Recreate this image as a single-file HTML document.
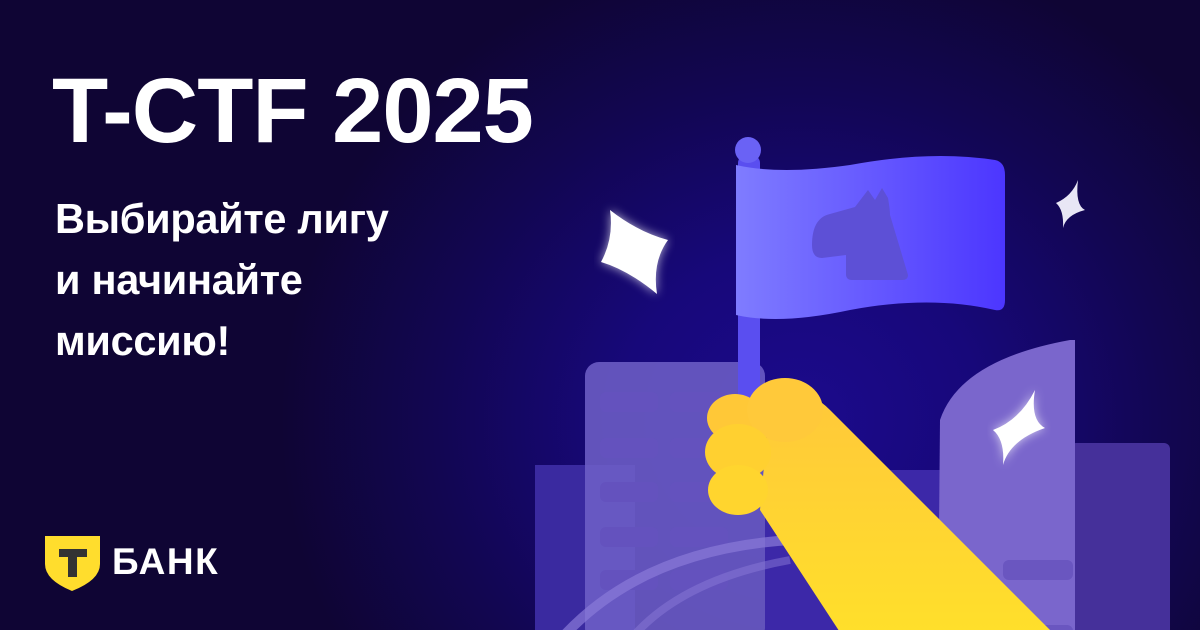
<!DOCTYPE html>
<html><head><meta charset="utf-8"><style>
html,body{margin:0;padding:0}
body{width:1200px;height:630px;overflow:hidden;position:relative;font-family:"Liberation Sans",sans-serif;
background:radial-gradient(ellipse 520px 480px at 800px 420px,#1c0a8c 0%,#17087a 35%,#120652 70%,#0f0534 100%);}
.t{position:absolute;color:#fff;font-weight:bold}
</style></head><body>
<div class="t" style="left:52px;top:60px;font-size:92px;letter-spacing:-1px;line-height:102px">T-CTF 2025</div>
<div class="t" style="left:55px;top:188px;font-size:41.5px;line-height:61px;letter-spacing:-0.3px">Выбирайте лигу<br>и начинайте<br>миссию!</div>
<svg style="position:absolute;left:0;top:0" width="1200" height="630" viewBox="0 0 1200 630">
<defs>
<linearGradient id="fl" x1="0" x2="1"><stop offset="0" stop-color="#7f7cff"/><stop offset="1" stop-color="#4c36ff"/></linearGradient>
<linearGradient id="arm" x1="0" y1="0" x2="0" y2="1"><stop offset="0" stop-color="#ffc83a"/><stop offset="1" stop-color="#ffe02a"/></linearGradient>
<filter id="gl"><feGaussianBlur stdDeviation="5"/></filter>
</defs>
<rect x="535" y="465" width="100" height="170" fill="#3a2aa0"/>
<rect x="585" y="362" width="180" height="280" rx="14" fill="#7060c8" opacity="0.85"/>
<g fill="#6452be">
<rect x="600" y="392" width="58" height="20" rx="6"/><rect x="670" y="392" width="58" height="20" rx="6"/>
<rect x="600" y="438" width="58" height="20" rx="6"/><rect x="670" y="438" width="58" height="20" rx="6"/>
<rect x="600" y="482" width="58" height="20" rx="6"/><rect x="670" y="482" width="58" height="20" rx="6"/>
<rect x="600" y="527" width="58" height="20" rx="6"/><rect x="670" y="527" width="58" height="20" rx="6"/>
<rect x="600" y="570" width="58" height="20" rx="6"/><rect x="670" y="570" width="58" height="20" rx="6"/>
</g>
<rect x="765" y="470" width="200" height="170" fill="#3c28a8"/>
<rect x="1070" y="443" width="100" height="200" rx="6" fill="#45309a"/>
<path d="M940 420 Q960 360 1070 340 L1075 340 L1075 640 L938 640 Z" fill="#7a66cc"/>
<g fill="#6a56c0"><rect x="1003" y="560" width="70" height="20" rx="6"/><rect x="1003" y="625" width="70" height="20" rx="6"/></g>
<path d="M560 640 Q640 550 790 540" stroke="#8a7ad8" stroke-width="10" fill="none" opacity="0.7"/>
<path d="M630 640 Q680 580 790 560" stroke="#8a7ad8" stroke-width="8" fill="none" opacity="0.5"/>
<rect x="738" y="155" width="22" height="250" rx="8" fill="#5a4ef0"/>
<circle cx="748" cy="150" r="13" fill="#6a62f5"/>
<path d="M736 165 Q780 175 850 165 Q930 150 995 160 Q1005 162 1005 175 L1005 300 Q1005 312 995 310 Q930 295 850 310 Q780 325 736 315 Z" fill="url(#fl)"/>
<path d="M812 245 Q812 218 830 214 L855 207 L868 190 L875 200 L882 188 L888 198 Q890 210 890 215 L908 275 Q908 280 902 280 L852 280 Q846 280 846 274 L846 255 L822 258 Q812 258 812 245 Z" fill="#5d50d6"/>
<path d="M770 400 Q800 380 830 410 L1060 640 L845 640 L760 510 Z" fill="url(#arm)"/>
<ellipse cx="735" cy="418" rx="28" ry="24" fill="#ffc837"/>
<ellipse cx="785" cy="410" rx="38" ry="32" fill="#ffc93a"/>
<ellipse cx="738" cy="452" rx="33" ry="28" fill="#ffd030"/>
<ellipse cx="738" cy="490" rx="30" ry="25" fill="#ffd52e"/>
<path d="M610 210 Q638 232 668 240 Q652 262 657 294 Q628 270 601 262 Q614 238 610 210Z" fill="#fff" filter="url(#gl)" opacity="0.7"/>
<path d="M610 210 Q638 232 668 240 Q652 262 657 294 Q628 270 601 262 Q614 238 610 210Z" fill="#fff"/>
<path d="M1078 180 Q1075 205 1085 210 Q1066 215 1063 228 Q1064 210 1056 203 Q1072 196 1078 180Z" fill="#e8e6f5"/>
<path d="M1035 390 Q1030 420 1045 428 Q1010 440 1003 465 Q1005 440 993 430 Q1020 420 1035 390Z" fill="#fff" filter="url(#gl)" opacity="0.7"/>
<path d="M1035 390 Q1030 420 1045 428 Q1010 440 1003 465 Q1005 440 993 430 Q1020 420 1035 390Z" fill="#fff"/>
<path d="M45 536 L100 536 L100 564 Q100 580 72 591 Q45 580 45 564 Z" fill="#ffdd2d"/>
<path d="M59 549 L87 549 L87 557 L77 557 L77 577 L68 577 L68 557 L59 557 Z" fill="#333"/>
</svg>
<div class="t" style="left:112px;top:541px;font-size:37px;line-height:42px;font-weight:900;letter-spacing:1.5px">БАНК</div>
</body></html>
